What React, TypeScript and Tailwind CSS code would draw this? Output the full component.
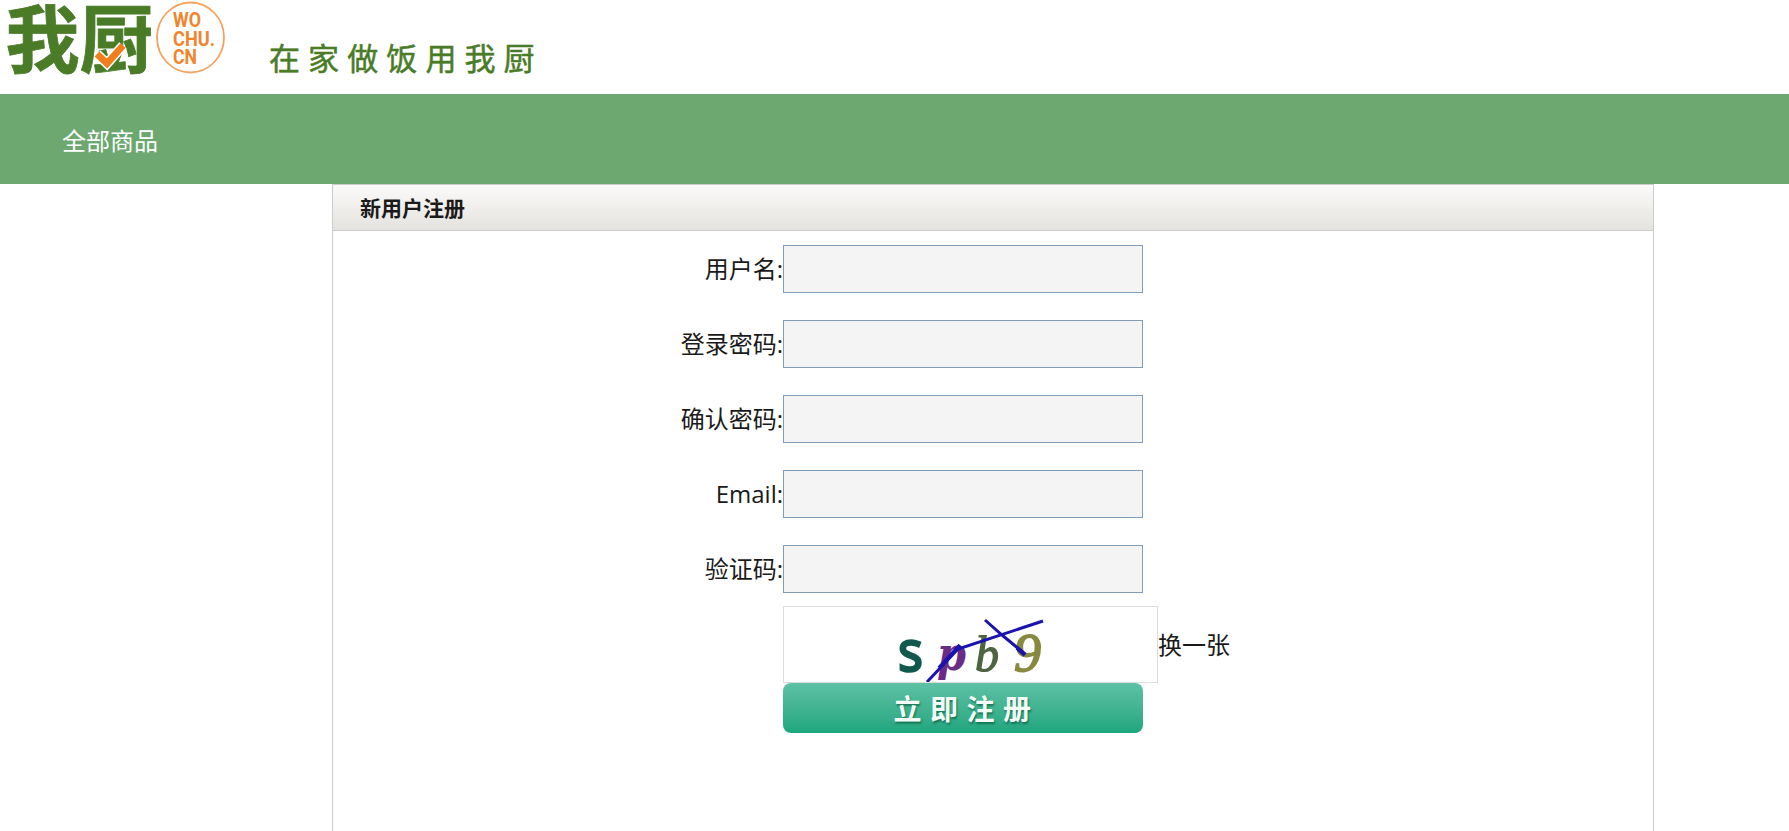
const fields = [
  { label: '用户名:', name: 'username', type: 'text' },
  { label: '登录密码:', name: 'password', type: 'password' },
  { label: '确认密码:', name: 'confirm', type: 'password' },
  { label: 'Email:', name: 'email', type: 'email' },
  { label: '验证码:', name: 'code', type: 'text' },
];

function Logo() {
  return (
    <svg className="block shrink-0" width="560" height="94" viewBox="0 0 560 94">
      <g fill="#4a7c28" stroke="#4a7c28" strokeWidth="0.8" fontWeight="700" fontSize="74" fontFamily="'Noto Sans CJK SC', sans-serif">
        <text x="5.500" y="66.500">我</text>
        <text x="79.500" y="66.500">厨</text>
      </g>
      <path d="M97 54 L107 63.500 L123 45.500" fill="none" stroke="#fff" strokeWidth="10" />
      <path d="M97 54 L107 63.500 L123 45.500" fill="none" stroke="#f07e1c" strokeWidth="7" />
      <ellipse cx="190.500" cy="37.500" rx="33.500" ry="35" fill="#fff" stroke="#f5a25c" strokeWidth="1.800" />
      <text fill="#f0852c" fontFamily="Roboto, 'Liberation Sans', sans-serif" fontWeight="700" fontSize="20.500">
        <tspan x="173" y="27" textLength="28" lengthAdjust="spacingAndGlyphs">WO</tspan>
        <tspan x="173" y="45.500" textLength="42" lengthAdjust="spacingAndGlyphs">CHU.</tspan>
        <tspan x="173" y="64" textLength="24" lengthAdjust="spacingAndGlyphs">CN</tspan>
      </text>
      <text x="269" y="70" fill="#4a7c28" stroke="#4a7c28" strokeWidth="0.5" fontSize="31" letterSpacing="8.100">在家做饭用我厨</text>
    </svg>
  );
}

function Captcha() {
  return (
    <svg width="150" height="75" viewBox="0 0 150 75" fontWeight="700">
      <text x="2" y="64" fill="#12594c" fontSize="56" fontFamily="'Noto Sans', sans-serif" fontWeight="400" textLength="25" lengthAdjust="spacingAndGlyphs" stroke="#12594c" strokeWidth="2.4">s</text>
      <text x="41" y="63" fill="#6a2c86" fontSize="46" fontFamily="'DejaVu Serif', serif" fontStyle="italic" textLength="29" lengthAdjust="spacingAndGlyphs">p</text>
      <text x="79" y="64" fill="#4d6440" fontSize="50" fontFamily="'Liberation Serif', serif" fontStyle="italic" fontWeight="400" stroke="#4d6440" strokeWidth="1.2" textLength="24" lengthAdjust="spacingAndGlyphs">b</text>
      <text x="118" y="64" fill="#87893f" fontSize="55" fontFamily="'Liberation Serif', serif" fontStyle="italic" fontWeight="400" stroke="#87893f" strokeWidth="1.8" textLength="27" lengthAdjust="spacingAndGlyphs">9</text>
      <path d="M31 75 L62 42 L147 14 M89 13 L106 28 L129 47" fill="none" stroke="#1a13ae" strokeWidth="3" />
      <path d="M43 61 L64 38 M121 41 L129 48" fill="none" stroke="#1a13ae" strokeWidth="4" />
    </svg>
  );
}

export default function App() {
  return (
    <div className="flex h-[831px] flex-col overflow-hidden bg-white font-['Open_Sans','Noto_Sans_CJK_SC',sans-serif] text-2xl text-[#1a1a1a]">
      <header className="h-[94px] shrink-0">
        <Logo />
      </header>
      <nav className="flex h-[90px] shrink-0 items-center bg-[#6ca86f] pl-[62px] pt-1 text-white">
        <a href="#">全部商品</a>
      </nav>
      <main className="ml-[332px] flex w-[1322px] flex-1 flex-col border-x border-t border-[#ccc]">
        <h1 className="flex h-[46px] shrink-0 items-center border-b border-[#ccc] bg-linear-to-b from-[#fbfaf9] to-[#e5e3df] pl-[27px] text-[21px] font-bold">
          新用户注册
        </h1>
        <form className="flex flex-col pt-3.5">
          <div className="flex flex-col gap-[27px]">
            {fields.map((field) => (
              <div key={field.name} className="flex h-12 items-center">
                <label htmlFor={field.name} className="w-[450px] text-right">
                  {field.label}
                </label>
                <input
                  id={field.name}
                  type={field.type}
                  className="h-12 w-[360px] border border-[#7f9db9] bg-[#f4f4f4] px-2 outline-none"
                />
              </div>
            ))}
          </div>
          <div className="ml-[450px] mt-[13px] flex items-center">
            <div className="flex h-[77px] w-[375px] items-center justify-center border border-[#ddd]">
              <Captcha />
            </div>
            <a href="#">换一张</a>
          </div>
          <button
            type="button"
            className="ml-[450px] h-[50px] w-[360px] rounded-lg bg-linear-to-b from-[#5dc1a5] to-[#1ca67d] pl-[7px] pt-0.5 text-[28px] leading-none font-bold tracking-[8.5px] text-[#f3fbf7] [text-shadow:1px_2px_2px_rgba(0,80,50,0.6)]"
          >
            立即注册
          </button>
        </form>
      </main>
    </div>
  );
}
